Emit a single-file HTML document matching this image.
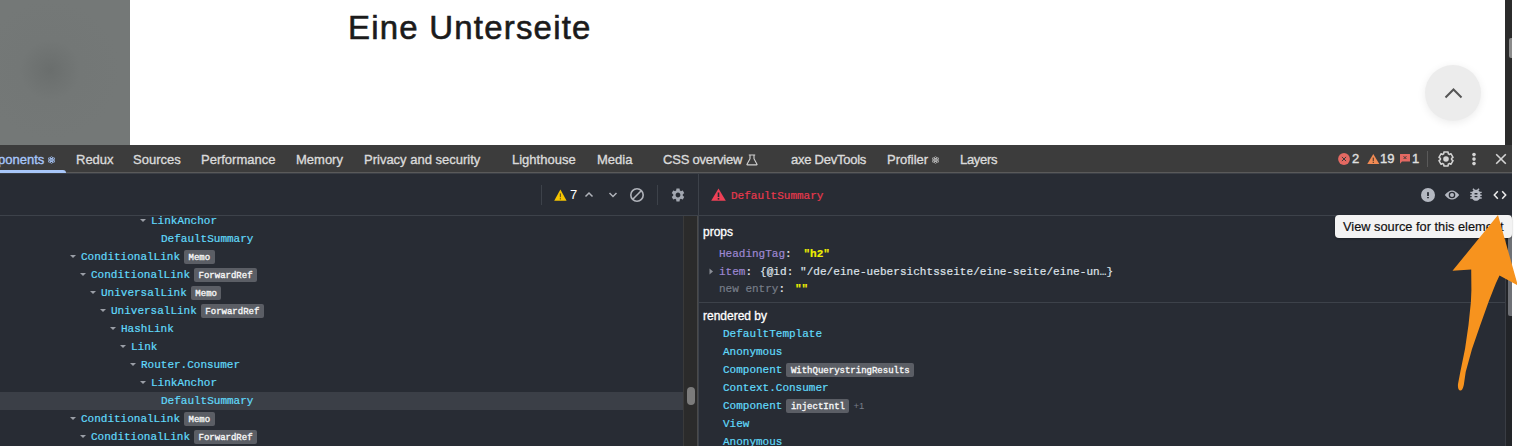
<!DOCTYPE html>
<html><head><meta charset="utf-8">
<style>
*{margin:0;padding:0;box-sizing:border-box}
html,body{width:1517px;height:446px;overflow:hidden;background:#fff;position:relative;font-family:"Liberation Sans",sans-serif}
.a{position:absolute}
.mono{font-family:"Liberation Mono",monospace;-webkit-text-stroke:0.2px currentColor}
#img{left:0;top:0;width:130px;height:145px;background:#737776;
 background-image:radial-gradient(circle at 50px 70px,#6a6e6d 0,#737776 30px,#747877 70px)}
#page{left:130px;top:0;width:1375px;height:145px;background:#fff}
#h1{left:348px;top:9px;font-size:33px;color:#1b1b1b;white-space:nowrap;letter-spacing:1.2px;-webkit-text-stroke:0.6px #1b1b1b}
#totop{left:1425px;top:65px;width:56px;height:56px;border-radius:50%;background:#ececec;box-shadow:0 2px 8px rgba(0,0,0,.08)}
#vscroll{left:1505px;top:0;width:7px;height:145px;background:#2b2b2b}
#vthumb{left:1509px;top:38px;width:3px;height:20px;background:#8a8a8a;border-radius:2px 0 0 2px}
#tabbar{left:0;top:145px;width:1512px;height:27px;background:#3c3c3c}
#tabline{left:0;top:172px;width:1512px;height:1px;background:#5a5a5a;box-shadow:0 1px 0 #3b3f46;z-index:2}
.tab{top:152px;font-size:13px;color:#dadada;white-space:nowrap;-webkit-text-stroke:0.35px currentColor}
#rd{left:0;top:173px;width:1512px;height:273px;background:#282c34}
#tb-border{left:0;top:215px;width:1512px;height:1px;background:#3d424a}
#divider{left:698px;top:173px;width:1px;height:273px;background:#3d424a}
.row{font-size:11px;color:#61dafb;white-space:nowrap;line-height:18px;height:18px}
.badge{display:inline-block;vertical-align:top;margin-top:2px;margin-left:4px;height:14px;line-height:16px;padding:0 4.5px;font-size:9px;border-radius:2px;background:#5b5e65;color:#f6f6f6;-webkit-text-stroke:0.35px #f6f6f6}
.tnum{top:151px;font-size:13px;color:#e0e0e0;-webkit-text-stroke:0.35px currentColor;white-space:nowrap}
.tri{display:inline-block;width:0;height:0;border-left:3px solid transparent;border-right:3px solid transparent;border-top:3.5px solid #9a9ea6}
</style></head><body>
<div class="a" id="img"></div>
<div class="a" id="page"></div>
<div class="a" id="h1">Eine Unterseite</div>
<div class="a" id="totop"></div>
<svg class="a" style="left:1443px;top:86px" width="21" height="14" viewBox="0 0 21 14"><path d="M2.5 11.5 L10.5 3.5 L18.5 11.5" fill="none" stroke="#555" stroke-width="2"/></svg>
<div class="a" id="vscroll"></div>
<div class="a" id="vthumb"></div>

<div class="a" id="tabbar"></div>
<div class="a" id="tabline"></div>
<div class="a" style="left:-3px;top:170px;width:69px;height:3px;background:#a8c7fa;border-radius:3px 3px 0 0;z-index:3"></div>
<div class="a tab" style="left:-2px;color:#a8c7fa">ponents</div>
<div class="a tab" style="left:76px">Redux</div>
<div class="a tab" style="left:133px">Sources</div>
<div class="a tab" style="left:201px">Performance</div>
<div class="a tab" style="left:296px">Memory</div>
<div class="a tab" style="left:364px">Privacy and security</div>
<div class="a tab" style="left:512px">Lighthouse</div>
<div class="a tab" style="left:597px">Media</div>
<div class="a tab" style="left:663px;letter-spacing:-0.2px">CSS overview</div>
<div class="a tab" style="left:791px;letter-spacing:-0.25px">axe DevTools</div>
<div class="a tab" style="left:887px">Profiler</div>
<div class="a tab" style="left:960px;letter-spacing:-0.3px">Layers</div>

<div class="a" id="rd"></div>
<div class="a" id="tb-border"></div>
<div class="a" id="divider"></div>


<!-- toolbar -->
<div class="a" style="left:541px;top:185px;width:1px;height:20px;background:#3d424a"></div>
<svg class="a" style="left:553.5px;top:189px" width="13" height="12" viewBox="0 0 13 12"><path d="M6.4 0.6 L12.6 11.8 L0.2 11.8 Z" fill="#f5c400"/><rect x="5.8" y="4.4" width="1.2" height="3.8" fill="#6b5a1a"/><rect x="5.8" y="9.2" width="1.2" height="1.2" fill="#6b5a1a"/></svg>
<div class="a" style="left:570px;top:187px;font-size:13px;color:#fff">7</div>
<svg class="a" style="left:584px;top:191px" width="10" height="8" viewBox="0 0 10 8"><path d="M1.5 5.5 L5 2 L8.5 5.5" fill="none" stroke="#b0b3ba" stroke-width="1.5"/></svg>
<svg class="a" style="left:608px;top:191px" width="10" height="8" viewBox="0 0 10 8"><path d="M1.5 2 L5 5.5 L8.5 2" fill="none" stroke="#b0b3ba" stroke-width="1.5"/></svg>
<svg class="a" style="left:629px;top:187px" width="16" height="16" viewBox="0 0 16 16"><circle cx="8" cy="8" r="6.2" fill="none" stroke="#b0b3ba" stroke-width="1.6"/><path d="M3.8 12.2 L12.2 3.8" stroke="#b0b3ba" stroke-width="1.6"/></svg>
<div class="a" style="left:657px;top:185px;width:1px;height:20px;background:#3d424a"></div>
<svg class="a" style="left:670px;top:187px" width="16" height="16" viewBox="0 0 24 24"><path fill="#a2a7b0" d="M19.14 12.94c.04-.3.06-.61.06-.94 0-.32-.02-.64-.07-.94l2.03-1.58c.18-.14.23-.41.12-.61l-1.92-3.32c-.12-.22-.37-.29-.59-.22l-2.39.96c-.5-.38-1.03-.7-1.62-.94l-.36-2.54c-.04-.24-.24-.41-.48-.41h-3.84c-.24 0-.43.17-.47.41l-.36 2.54c-.59.24-1.13.57-1.62.94l-2.39-.96c-.22-.08-.47 0-.59.22L2.74 8.87c-.12.21-.08.47.12.61l2.03 1.58c-.05.3-.09.63-.09.94s.02.64.07.94l-2.03 1.58c-.18.14-.23.41-.12.61l1.92 3.32c.12.22.37.29.59.22l2.39-.96c.5.38 1.03.7 1.62.94l.36 2.54c.05.24.24.41.48.41h3.84c.24 0 .44-.17.47-.41l.36-2.54c.59-.24 1.13-.56 1.62-.94l2.39.96c.22.08.47 0 .59-.22l1.92-3.32c.12-.22.07-.47-.12-.61l-2.01-1.58zM12 15.6c-1.98 0-3.6-1.62-3.6-3.6s1.62-3.6 3.6-3.6 3.6 1.62 3.6 3.6-1.62 3.6-3.6 3.6z"/></svg>
<svg class="a" style="left:711px;top:188px" width="15" height="13" viewBox="0 0 15 13"><path d="M7.5 0.5 L14.8 12.8 L0.2 12.8 Z" fill="#ef4056"/><rect x="6.7" y="4.5" width="1.6" height="4.5" fill="#282c34"/><rect x="6.7" y="10" width="1.6" height="1.6" fill="#282c34"/></svg>
<div class="a mono" style="left:731px;top:188px;font-size:11px;color:#e8394d;line-height:16px">DefaultSummary</div>
<!-- tree -->
<div class="a" style="left:0;top:392px;width:683px;height:18px;background:#3b3f47"></div>
<div class="a tri" style="left:140px;top:219px"></div>
<div class="a row mono" style="left:151px;top:212px">LinkAnchor</div>
<div class="a row mono" style="left:161px;top:230px">DefaultSummary</div>
<div class="a tri" style="left:70px;top:255px"></div>
<div class="a row mono" style="left:81px;top:248px">ConditionalLink<span class="badge">Memo</span></div>
<div class="a tri" style="left:80px;top:273px"></div>
<div class="a row mono" style="left:91px;top:266px">ConditionalLink<span class="badge">ForwardRef</span></div>
<div class="a tri" style="left:90px;top:291px"></div>
<div class="a row mono" style="left:101px;top:284px">UniversalLink<span class="badge">Memo</span></div>
<div class="a tri" style="left:100px;top:309px"></div>
<div class="a row mono" style="left:111px;top:302px">UniversalLink<span class="badge">ForwardRef</span></div>
<div class="a tri" style="left:110px;top:327px"></div>
<div class="a row mono" style="left:121px;top:320px">HashLink</div>
<div class="a tri" style="left:120px;top:345px"></div>
<div class="a row mono" style="left:131px;top:338px">Link</div>
<div class="a tri" style="left:130px;top:363px"></div>
<div class="a row mono" style="left:141px;top:356px">Router.Consumer</div>
<div class="a tri" style="left:140px;top:381px"></div>
<div class="a row mono" style="left:151px;top:374px">LinkAnchor</div>
<div class="a row mono" style="left:161px;top:392px">DefaultSummary</div>
<div class="a tri" style="left:70px;top:417px"></div>
<div class="a row mono" style="left:81px;top:410px">ConditionalLink<span class="badge">Memo</span></div>
<div class="a tri" style="left:80px;top:435px"></div>
<div class="a row mono" style="left:91px;top:428px">ConditionalLink<span class="badge">ForwardRef</span></div>

<!-- right pane -->
<div class="a" style="left:703px;top:225px;font-size:12px;color:#fff;line-height:14px;-webkit-text-stroke:0.3px #fff">props</div>
<div class="a mono" style="left:719px;top:248px;font-size:11px;line-height:12px;color:#9d87d2">HeadingTag<span style="color:#e8e8e8">:</span></div>
<div class="a mono" style="left:803.5px;top:248px;font-size:11px;line-height:12px;color:#f0f000;font-weight:bold">"h2"</div>
<svg class="a" style="left:709px;top:268px" width="5" height="7" viewBox="0 0 5 7"><path d="M0.5 0.5 L4 3.5 L0.5 6.5 Z" fill="#8a8e96"/></svg>
<div class="a mono" style="left:719px;top:266px;font-size:11px;line-height:12px;color:#9d87d2">item<span style="color:#e8e8e8">:</span></div>
<div class="a mono" style="left:760px;top:265.5px;font-size:11px;line-height:12px;color:#dfe3ea;letter-spacing:0.06px">{@id: "/de/eine-uebersichtsseite/eine-seite/eine-un…}</div>
<div class="a mono" style="left:719px;top:283px;font-size:11px;line-height:12px;color:#777d88">new entry<span style="color:#e8e8e8">:</span></div>
<div class="a mono" style="left:795px;top:283px;font-size:11px;line-height:12px;color:#f0f000;font-weight:bold">""</div>
<div class="a" style="left:699px;top:302px;width:806px;height:1px;background:#3d424a"></div>
<div class="a" style="left:703px;top:309px;font-size:12px;color:#fff;line-height:14px;-webkit-text-stroke:0.3px #fff">rendered by</div>
<div class="a row mono" style="left:723px;top:325px">DefaultTemplate</div>
<div class="a row mono" style="left:723px;top:343px">Anonymous</div>
<div class="a row mono" style="left:723px;top:361px">Component<span class="badge">WithQuerystringResults</span></div>
<div class="a row mono" style="left:723px;top:379px">Context.Consumer</div>
<div class="a row mono" style="left:723px;top:397px">Component<span class="badge">injectIntl</span><span style="font-family:Liberation Sans;font-size:9.5px;color:#777d88;margin-left:4px;vertical-align:top;line-height:18px;-webkit-text-stroke:0">+1</span></div>
<div class="a row mono" style="left:723px;top:415px">View</div>
<div class="a row mono" style="left:723px;top:433px">Anonymous</div>

<!-- left scrollbar -->
<div class="a" style="left:683px;top:216px;width:15px;height:230px;background:#2b2b2b;border-left:1px solid #3a3a3a;border-right:1px solid #4a4a4a"></div>
<div class="a" style="left:687px;top:387px;width:8px;height:18px;border-radius:4px;background:#7b7b7b"></div>
<!-- right scrollbar -->
<div class="a" style="left:1505px;top:216px;width:7px;height:230px;background:#222428;border-left:1px solid #3a3d44"></div>
<div class="a" style="left:1508px;top:228px;width:4px;height:88px;border-radius:2px 0 0 2px;background:#6e7075"></div>
<!-- tabbar icons -->
<svg class="a" style="left:48px;top:156px" width="7" height="8" viewBox="1.5 0 21 24" preserveAspectRatio="none"><g fill="none" stroke="#a8c7fa" stroke-width="2.2"><ellipse cx="12" cy="12" rx="11" ry="4" transform="rotate(90 12 12)"/><ellipse cx="12" cy="12" rx="11" ry="4" transform="rotate(30 12 12)"/><ellipse cx="12" cy="12" rx="11" ry="4" transform="rotate(150 12 12)"/></g><circle cx="12" cy="12" r="2" fill="#a8c7fa"/></svg>
<svg class="a" style="left:932px;top:156px" width="7" height="8" viewBox="1.5 0 21 24" preserveAspectRatio="none"><g fill="none" stroke="#bdbdbd" stroke-width="2.2"><ellipse cx="12" cy="12" rx="11" ry="4" transform="rotate(90 12 12)"/><ellipse cx="12" cy="12" rx="11" ry="4" transform="rotate(30 12 12)"/><ellipse cx="12" cy="12" rx="11" ry="4" transform="rotate(150 12 12)"/></g><circle cx="12" cy="12" r="2" fill="#bdbdbd"/></svg>
<svg class="a" style="left:746px;top:154px" width="12" height="12" viewBox="0 0 12 12"><path d="M2.8 1 H9.2 M4 1 V4.8 L1 10.2 Q0.7 10.9 1.4 10.9 H10.6 Q11.3 10.9 11 10.2 L8 4.8 V1" fill="none" stroke="#d0d0d0" stroke-width="1.1" stroke-linejoin="round"/></svg>
<!-- right tabbar -->
<svg class="a" style="left:1338px;top:153px" width="12" height="12" viewBox="0 0 12 12"><circle cx="6" cy="6" r="5.9" fill="#e46962"/><path d="M3.9 3.9 L8.1 8.1 M8.1 3.9 L3.9 8.1" stroke="#3c3c3c" stroke-width="1"/></svg>
<div class="a tnum" style="left:1352px">2</div>
<svg class="a" style="left:1367px;top:154px" width="13" height="10" viewBox="0 0 13 10"><path d="M6.3 0 L12.3 10 L0.3 10 Z" fill="#f28b54"/><rect x="5.7" y="3.6" width="1.2" height="3.6" fill="#5a4030"/><rect x="5.7" y="7.9" width="1.2" height="1.1" fill="#5a4030"/></svg>
<div class="a tnum" style="left:1380px">19</div>
<svg class="a" style="left:1400px;top:154px" width="11" height="10" viewBox="0 0 11 10"><path d="M0 0.3 Q0 0 0.3 0 H9.7 Q10 0 10 0.3 V7.2 Q10 7.5 9.7 7.5 H2 L0 9.7 Z" fill="#e46962"/><path d="M3.6 2.2 L6.4 5 M6.4 2.2 L3.6 5" stroke="#3c3c3c" stroke-width="1"/></svg>
<div class="a tnum" style="left:1412px">1</div>
<div class="a" style="left:1427px;top:151px;width:1px;height:16px;background:#5a5a5a"></div>
<svg class="a" style="left:1438px;top:151px" width="16" height="16" viewBox="0 0 16 16"><path fill="none" stroke="#d4d4d4" stroke-width="1.5" stroke-linejoin="round" d="M5.72 2.88 L5.89 1.11 L10.11 1.11 L10.28 2.88 L11.29 3.47 L12.91 2.73 L15.02 6.38 L13.57 7.41 L13.57 8.59 L15.02 9.62 L12.91 13.27 L11.29 12.53 L10.28 13.12 L10.11 14.89 L5.89 14.89 L5.72 13.12 L4.71 12.53 L3.09 13.27 L0.98 9.62 L2.43 8.59 L2.43 7.41 L0.98 6.38 L3.09 2.73 L4.71 3.47 Z"/><circle cx="8" cy="8" r="2.8" fill="#d4d4d4"/></svg>
<svg class="a" style="left:1472px;top:152px" width="4" height="14" viewBox="0 0 4 14"><circle cx="2" cy="2.6" r="1.8" fill="#d4d4d4"/><circle cx="2" cy="7.1" r="1.8" fill="#d4d4d4"/><circle cx="2" cy="11.6" r="1.8" fill="#d4d4d4"/></svg>
<svg class="a" style="left:1495px;top:153px" width="12" height="12" viewBox="0 0 12 12"><path d="M1.2 1.2 L10.8 10.8 M10.8 1.2 L1.2 10.8" stroke="#d4d4d4" stroke-width="1.6"/></svg>
<!-- right toolbar icons -->
<svg class="a" style="left:1421px;top:188px" width="14" height="14" viewBox="0 0 14 14"><circle cx="7" cy="7" r="7" fill="#b4b8c1"/><rect x="6.1" y="4.1" width="1.8" height="4" rx="0.4" fill="#282c34"/><rect x="6.1" y="9" width="1.8" height="1.3" rx="0.3" fill="#282c34"/></svg>
<svg class="a" style="left:1444px;top:189px" width="16" height="12" viewBox="0 0 16 12"><path d="M0.8 6 Q8 -3.2 15.2 6 Q8 15.2 0.8 6 Z" fill="#b4b8c1"/><circle cx="8" cy="6" r="3.3" fill="#282c34"/><circle cx="8" cy="6" r="2" fill="#b4b8c1"/></svg>
<svg class="a" style="left:1470px;top:188.3px" width="12" height="13" viewBox="3.6 2.6 16.8 18.8" preserveAspectRatio="none"><path fill="#b4b8c1" d="M20 8h-2.81c-.45-.78-1.07-1.45-1.82-1.960L17 4.41 15.59 3l-2.17 2.17C12.960 5.060 12.490 5 12 5c-.49 0-.96.06-1.41.17L8.41 3 7 4.41l1.62 1.63C7.880 6.550 7.260 7.220 6.810 8H4v2h2.09c-.05.33-.09.66-.09 1v1H4v2h2v1c0 .34.04.67.09 1H4v2h2.81c1.04 1.79 2.97 3 5.19 3s4.15-1.21 5.19-3H20v-2h-2.09c.05-.33.09-.66.09-1v-1h2v-2h-2v-1c0-.34-.04-.67-.09-1H20V8zm-6 8h-4v-2h4v2zm0-4h-4v-2h4v2z"/></svg>
<svg class="a" style="left:1493px;top:190px" width="14" height="10" viewBox="0 0 14 10"><path d="M4.8 1.2 L1.3 5 L4.8 8.8 M9.2 1.2 L12.7 5 L9.2 8.8" fill="none" stroke="#ececec" stroke-width="1.5"/></svg>
<!-- tooltip -->
<div class="a" style="left:1335px;top:215px;width:177px;height:23px;border-radius:4px;background:#f3f3f3;box-shadow:0 1px 2px rgba(0,0,0,.3)"></div>
<div class="a" style="left:1343px;top:219px;font-size:12.8px;color:#111;white-space:nowrap;line-height:15px;-webkit-text-stroke:0.2px #111">View source for this element</div>
<!-- arrow -->
<svg class="a" style="left:0;top:0" width="1517" height="446" viewBox="0 0 1517 446"><path d="M1498 215 L1517 282.6 L1517 285 L1499.5 275.5 L1496 283 L1493.2 290 L1488.5 302 L1480.3 325 L1472 349 L1465.7 372 L1463.8 385 Q1462.5 391 1460 390.5 Q1457.5 389.5 1458 384 L1460.3 372 L1465 349 L1468.5 325 L1470.9 302 L1471.4 290 L1471.2 269.5 L1452.5 270.8 Z" fill="#f7931e"/></svg>
</body></html>
